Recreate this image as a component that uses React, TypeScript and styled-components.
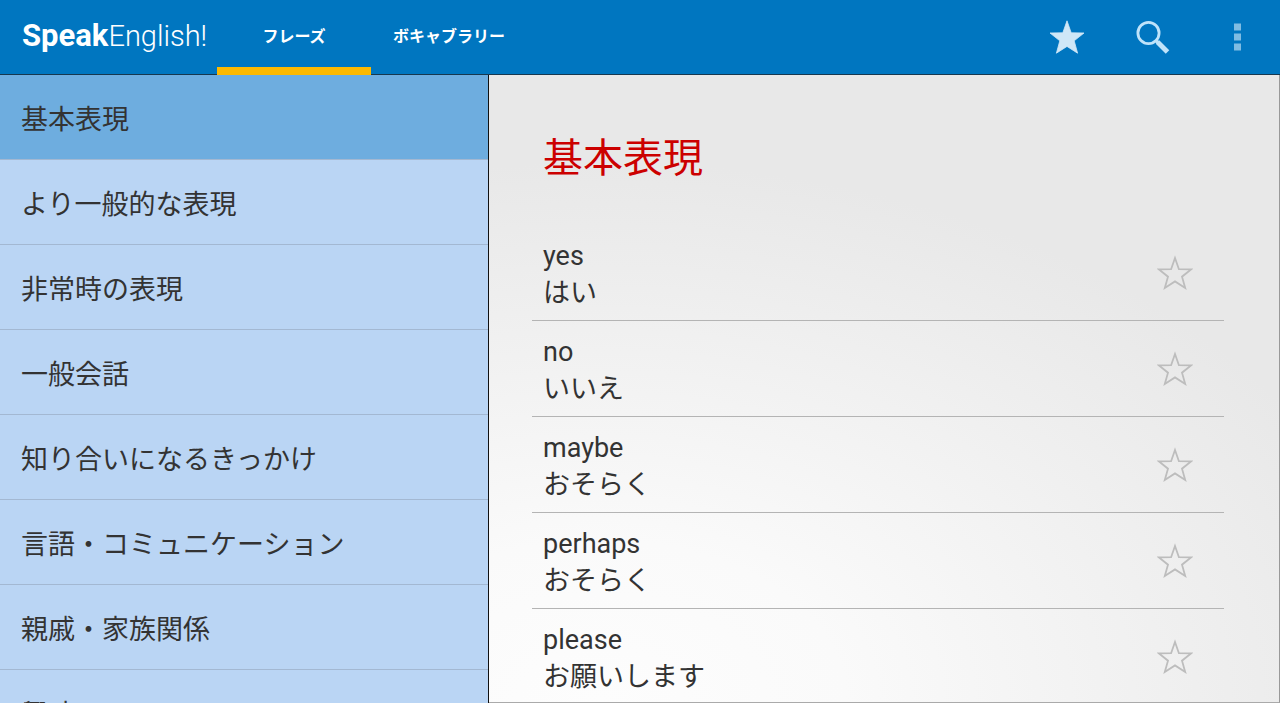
import React, { useState } from "react";
import styled, { createGlobalStyle } from "styled-components";

const GlobalStyle = createGlobalStyle`
  *, *::before, *::after { box-sizing: border-box; }
  body {
    margin: 0;
    font-family: Roboto, "Noto Sans CJK JP", sans-serif;
    color: #333;
  }
  button { font: inherit; color: inherit; border: 0; margin: 0; padding: 0; background: none; cursor: pointer; }
  ul { list-style: none; margin: 0; padding: 0; }
  h1, h2, p { margin: 0; }
`;

const Screen = styled.div`
  display: flex;
  flex-direction: column;
  height: 100vh;
  overflow: hidden;
`;

const TopBar = styled.header`
  display: flex;
  flex: none;
  height: 75px;
  background: #0076c0;
  border-bottom: 1px solid #17384f;
`;

const Logo = styled.h1`
  display: flex;
  align-items: baseline;
  width: 217px;
  padding: 16px 0 0 22px;
  line-height: 40px;
  color: #fff;
`;

const LogoStrong = styled.span`
  font-size: 31px;
  font-weight: 700;
`;

const LogoLight = styled.span`
  font-size: 29px;
  font-weight: 300;
`;

const Tabs = styled.nav`
  display: flex;
  flex: 1;
`;

const Tab = styled.button<{ $active: boolean }>`
  position: relative;
  height: 75px;
  padding: 0 22px 6px;
  min-width: 154px;
  font-size: 16px;
  font-weight: 700;
  color: #fff;

  & + &::before {
    content: "";
    position: absolute;
    left: 0;
    top: 16px;
    bottom: 16px;
    width: 1px;
    background: #2a8ccb;
  }

  &::after {
    content: "";
    position: absolute;
    left: 0;
    right: 0;
    bottom: 0;
    height: 8px;
    background: ${(p) => (p.$active ? "#fdb900" : "transparent")};
  }
`;

const Actions = styled.div`
  display: flex;
`;

const ActionButton = styled.button`
  display: flex;
  align-items: center;
  justify-content: center;
  width: 85px;
`;

const Body = styled.div`
  display: flex;
  flex: 1;
  min-height: 0;
`;

const Sidebar = styled.nav`
  flex: 0 0 489px;
  overflow: hidden;
  background: #bad5f4;
  border-right: 1px solid #111;
`;

const Category = styled.button<{ $active: boolean }>`
  display: block;
  width: 100%;
  height: 85px;
  padding: 0 21px;
  border-bottom: 1px solid #a3b8d2;
  background: ${(p) => (p.$active ? "#6eaddf" : "transparent")};
  font-size: 27px;
  text-align: left;
`;

const Content = styled.main`
  flex: 1;
  min-width: 0;
  overflow: hidden;
  padding: 54px 55px 0 43px;
  border-right: 1px solid #999;
  border-bottom: 1px solid #aaa;
  background: radial-gradient(ellipse 820px 540px at 14% 100%, #fdfdfd 0%, #fafafa 30%, #e8e8e8 100%);
`;

const Title = styled.h2`
  padding-left: 11px;
  margin-bottom: 36px;
  font-size: 40px;
  line-height: 60px;
  font-weight: 400;
  color: #c00;
`;

const Phrase = styled.li`
  display: flex;
  align-items: center;
  justify-content: space-between;
  height: 96px;
  padding: 4px 31px 0 11px;
  border-bottom: 1px solid #b4b4b4;
`;

const PhraseText = styled.p`
  font-size: 27px;
  line-height: 37px;

  span { display: block; }
`;

const STAR = "M18 1.8 L22.2 13.8 L35 14 L25.2 21.8 L28.6 34.2 L18 27.4 L7.4 34.2 L10.8 21.8 L1 14 L13.8 13.8 Z";
const STAR_OUTLINE = "M18 3 L21.9 14.2 L34 14.4 L25 21.7 L28.2 33 L18 26.4 L7.8 33 L11 21.7 L2 14.4 L14.1 14.2 Z";

const categories = [
  "基本表現",
  "より一般的な表現",
  "非常時の表現",
  "一般会話",
  "知り合いになるきっかけ",
  "言語・コミュニケーション",
  "親戚・家族関係",
  "興味",
];

const phrases = [
  ["yes", "はい"],
  ["no", "いいえ"],
  ["maybe", "おそらく"],
  ["perhaps", "おそらく"],
  ["please", "お願いします"],
];

export default function App() {
  const [tab, setTab] = useState(0);
  const [category, setCategory] = useState(0);

  return (
    <Screen>
      <GlobalStyle />
      <TopBar>
        <Logo>
          <LogoStrong>Speak</LogoStrong>
          <LogoLight>English!</LogoLight>
        </Logo>
        <Tabs>
          {["フレーズ", "ボキャブラリー"].map((label, i) => (
            <Tab key={label} $active={tab === i} onClick={() => setTab(i)}>
              {label}
            </Tab>
          ))}
        </Tabs>
        <Actions>
          <ActionButton aria-label="お気に入り">
            <svg width="38" height="36" viewBox="0 0 38 36">
              <path d={STAR} fill="#cfe7f7" stroke="#cfe7f7" strokeWidth="0.8" />
            </svg>
          </ActionButton>
          <ActionButton aria-label="検索">
            <svg width="36" height="36" viewBox="0 0 36 36" fill="none" stroke="#bfe3fa">
              <circle cx="13.5" cy="14" r="10.6" strokeWidth="2.8" />
              <path d="M21 21.5 L23 23.5" strokeWidth="3.4" />
              <path d="M22.5 23 L32.5 33" strokeWidth="5" />
            </svg>
          </ActionButton>
          <ActionButton aria-label="メニュー">
            <svg width="8" height="28" viewBox="0 0 8 28" fill="#80bce2">
              <path d="M0 0.5h7v7H0zM0 10.5h7v7H0zM0 20.5h7v7H0z" />
            </svg>
          </ActionButton>
        </Actions>
      </TopBar>
      <Body>
        <Sidebar>
          <ul>
            {categories.map((name, i) => (
              <li key={name}>
                <Category $active={category === i} onClick={() => setCategory(i)}>
                  {name}
                </Category>
              </li>
            ))}
          </ul>
        </Sidebar>
        <Content>
          <Title>{categories[category]}</Title>
          <ul>
            {phrases.map(([en, ja]) => (
              <Phrase key={en}>
                <PhraseText>
                  <span>{en}</span>
                  <span lang="ja">{ja}</span>
                </PhraseText>
                <button aria-label={en}>
                  <svg width="36" height="36" viewBox="0 0 36 36">
                    <path d={STAR_OUTLINE} fill="none" stroke="#bdbdbd" strokeWidth="1.8" />
                  </svg>
                </button>
              </Phrase>
            ))}
          </ul>
        </Content>
      </Body>
    </Screen>
  );
}
